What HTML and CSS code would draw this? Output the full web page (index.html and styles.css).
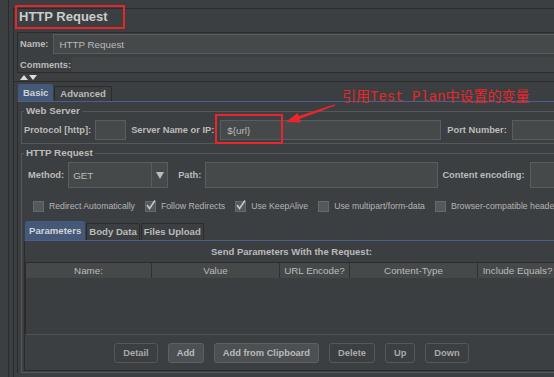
FILE: index.html
```html
<!DOCTYPE html>
<html lang="en">
<head>
    <meta charset="UTF-8">
    <meta name="viewport" content="width=device-width, initial-scale=1.0">
    <title>HTTP Request</title>
    <link rel="stylesheet" href="styles.css">
</head>
<body>
    <div class="side"><span class="side-grip"></span></div>
    <div class="main">
        <div class="title-row">
            <h1 class="title">HTTP Request</h1>
        </div>
        <div class="namebox">
            <div class="row name-row">
                <span>Name:</span>
                <div class="field name-field">HTTP Request</div>
            </div>
            <div class="row comments-row">
                <span>Comments:</span>
                <div class="field comments-field"></div>
            </div>
        </div>
        <div class="split-bar">
            <span class="tri up"></span><span class="tri down"></span>
            <span class="grip-h"></span>
        </div>
        <div class="tabs">
            <div class="tab active">Basic</div>
            <div class="tab">Advanced</div>
        </div>
        <div class="tab-body">
            <div class="group web-server">
                <div class="group-title">Web Server</div>
                <div class="row ws-row">
                    <span class="l-protocol">Protocol [http]:</span>
                    <div class="field w-protocol"></div>
                    <span class="l-server">Server Name or IP:</span>
                    <div class="field w-server">${url}</div>
                    <span class="l-port">Port Number:</span>
                    <div class="field w-port"></div>
                </div>
            </div>
            <div class="group http-group">
                <div class="group-title">HTTP Request</div>
                <div class="row method-row">
                    <span class="l-method">Method:</span>
                    <div class="select">
                        <span class="select-value">GET</span>
                        <span class="select-btn"><span class="caret"></span></span>
                    </div>
                    <span class="l-path">Path:</span>
                    <div class="field w-path"></div>
                    <span class="l-enc">Content encoding:</span>
                    <div class="field w-enc"></div>
                </div>
                <div class="row checks-row">
                    <span class="check"></span><span class="check-label">Redirect Automatically</span>
                    <span class="check on"><svg viewBox="0 0 11 11" width="11" height="11"><polyline points="2,5 4.5,8.5 10,0.5" fill="none" stroke="#c4c4c4" stroke-width="1.6"/></svg></span><span class="check-label">Follow Redirects</span>
                    <span class="check on"><svg viewBox="0 0 11 11" width="11" height="11"><polyline points="2,5 4.5,8.5 10,0.5" fill="none" stroke="#c4c4c4" stroke-width="1.6"/></svg></span><span class="check-label">Use KeepAlive</span>
                    <span class="check"></span><span class="check-label">Use multipart/form-data</span>
                    <span class="check"></span><span class="check-label">Browser-compatible headers</span>
                </div>
                <div class="params">
                    <div class="ptabs">
                        <div class="ptab active">Parameters</div>
                        <div class="ptab">Body Data</div>
                        <div class="ptab">Files Upload</div>
                    </div>
                    <div class="pbody">
                        <div class="caption">Send Parameters With the Request:</div>
                        <div class="table">
                            <div class="thead">
                                <div class="th">Name:</div>
                                <div class="th">Value</div>
                                <div class="th">URL Encode?</div>
                                <div class="th">Content-Type</div>
                                <div class="th">Include Equals?</div>
                            </div>
                            <div class="tbody"></div>
                        </div>
                        <div class="buttons">
                            <button class="btn dim">Detail</button>
                            <button class="btn">Add</button>
                            <button class="btn">Add from Clipboard</button>
                            <button class="btn dim">Delete</button>
                            <button class="btn dim">Up</button>
                            <button class="btn dim">Down</button>
                        </div>
                    </div>
                </div>
            </div>
        </div>
    </div>

    <!-- annotation drawn over the screenshot -->
    <div class="note">引用Test Plan中设置的变量</div>
    <div class="mark"></div>
    <svg class="arrow" width="554" height="377" viewBox="0 0 554 377">
        <polygon fill="#e8262b" points="286,122 297.7,112.8 298.8,116.1 334.8,104.3 335.4,105.6 299.8,118.9 300.9,122.4"/>
    </svg>
</body>
</html>
```

FILE: styles.css
```css
* {
    box-sizing: border-box;
}
html, body {
    margin: 0;
    background-color: #3c3f41;
}
body {
    width: 554px;
    height: 377px;
    overflow: hidden;
    display: flex;
    position: relative;
    font-family: "Liberation Sans", Arial, sans-serif;
    font-size: 9.3px;
    font-weight: bold;
    color: #bbbbbb;
}
.side {
    width: 9px;
    flex-shrink: 0;
    border-right: 1px solid #2b2b2b;
    display: flex;
    flex-direction: column;
    justify-content: center;
    align-items: center;
}
.side-grip {
    width: 4px;
    height: 9px;
    margin-top: 23px;
    background-image: radial-gradient(#a0a0a0 45%, transparent 50%);
    background-size: 2px 2px;
}
.main {
    width: 546px;
    flex-shrink: 0;
    margin-left: 4px;
    margin-top: 8px;
    border-top: 1px solid #2b2b2b;
    border-left: 1px solid #2b2b2b;
}
.title-row {
    height: 23px;
    display: flex;
    align-items: flex-start;
}
.title {
    margin: -4px 0 0 1px;
    padding: 2px 15px 2px 2px;
    border: 2px solid #e5272b;
    font-size: 13px;
    line-height: 16px;
    color: #cccccc;
}
.row {
    display: flex;
    align-items: center;
    white-space: nowrap;
}
.field {
    height: 100%;
    background-color: #45494a;
    border: 1px solid #5a5d5f;
    padding-left: 5px;
    display: flex;
    align-items: center;
    font-weight: normal;
    font-size: 9.8px;
    flex-shrink: 0;
}
.namebox {
    margin-left: 3px;
    padding: 1px 0 0 2px;
    border-top: 1px solid #2b2b2b;
    border-left: 1px solid #2b2b2b;
    border-bottom: 1px solid #2b2b2b;
}
.name-row {
    height: 20px;
    gap: 5px;
}
.name-field {
    flex: 1;
}
.comments-row {
    height: 15px;
    margin-top: 3px;
    gap: 1px;
}
.comments-field {
    flex: 1;
    background-color: #424547;
    border-color: #424547;
}
.split-bar {
    height: 9px;
    padding-left: 6px;
    border-bottom: 1px solid #2b2b2b;
    display: flex;
    align-items: center;
}
.tri {
    width: 0;
    height: 0;
    border-left: 4.5px solid transparent;
    border-right: 4.5px solid transparent;
    margin-right: 1px;
}
.tri.up {
    border-bottom: 5px solid #dddddd;
}
.tri.down {
    border-top: 5px solid #dddddd;
}
.grip-h {
    width: 12px;
    height: 3px;
    margin-left: 252px;
    background-image: radial-gradient(#a8a8a8 45%, transparent 50%);
    background-size: 2px 1.5px;
}
.tabs {
    height: 19px;
    padding-left: 4px;
    display: flex;
    align-items: flex-end;
}
.tab {
    height: 15px;
    line-height: 14px;
    padding: 0 5px;
    margin-left: 1px;
    border: 1px solid #2b2b2b;
    border-bottom: none;
    border-radius: 2px 2px 0 0;
    font-size: 9.5px;
}
.tab.active {
    height: 17px;
    line-height: 17px;
    margin-left: 0;
    border: none;
    background-color: #44587a;
    color: #d2d2d2;
}
.tab-body {
    margin-left: 3px;
    padding-left: 3px;
    border-top: 1px solid #4a6088;
    border-left: 1px solid #2b2b2b;
}
.group {
    border: 1px solid #55585a;
}
.group-title {
    width: fit-content;
    margin: -7px 0 0 2px;
    padding: 0 2px;
    line-height: 12px;
    font-size: 9.8px;
    background-color: #3c3f41;
}
.web-server {
    margin-top: 9px;
    padding-bottom: 3px;
}
.ws-row {
    height: 20px;
    margin-top: 3px;
    padding-left: 2px;
}
.l-protocol { margin-right: 4px; }
.w-protocol { width: 31px; }
.l-server { margin: 0 6px 0 5px; }
.w-server { width: 221px; padding-left: 6px; }
.l-port { margin: 0 5px 0 6px; }
.w-port { width: 60px; }
.http-group {
    margin-top: 9px;
    padding-bottom: 1px;
}
.method-row {
    height: 26px;
    margin-top: 3px;
    padding-left: 6px;
}
.l-method { margin-right: 4px; }
.select {
    width: 100px;
    height: 100%;
    display: flex;
    flex-shrink: 0;
    background-color: #45494a;
    border: 1px solid #5a5d5f;
}
.select-value {
    flex: 1;
    padding-left: 4px;
    display: flex;
    align-items: center;
    font-weight: normal;
    font-size: 9.8px;
}
.select-btn {
    width: 16px;
    border-left: 1px solid #5a5d5f;
    display: flex;
    align-items: center;
    justify-content: center;
}
.caret {
    width: 0;
    height: 0;
    border-left: 4px solid transparent;
    border-right: 4px solid transparent;
    border-top: 7px solid #bbbbbb;
}
.l-path { margin: 0 4px 0 10px; }
.w-path { width: 233px; }
.l-enc { margin: 0 5px 0 4px; }
.w-enc { width: 40px; }
.checks-row {
    height: 12px;
    margin-top: 12px;
    padding-left: 11px;
}
.check {
    width: 11px;
    height: 11px;
    flex-shrink: 0;
    background-color: #54585a;
    border: 1px solid #65696b;
    display: flex;
    overflow: visible;
}
.check svg {
    margin: -2px 0 0 -1px;
    overflow: visible;
}
.check-label {
    margin: 0 10px 0 5px;
    font-weight: normal;
    font-size: 8.7px;
    color: #b4b4b4;
}
.params {
    margin: 9px 0 0 2px;
}
.ptabs {
    height: 19px;
    padding-left: 1px;
    display: flex;
    align-items: flex-end;
}
.ptab {
    height: 17px;
    line-height: 16px;
    padding: 0 2px;
    margin-left: 1px;
    border: 1px solid #2b2b2b;
    border-bottom: none;
    border-radius: 2px 2px 0 0;
    font-size: 9.6px;
}
.ptab.active {
    height: 19px;
    line-height: 19px;
    padding: 0 4px;
    margin-left: 0;
    border: none;
    background-color: #44587a;
    color: #d2d2d2;
}
.pbody {
    border-top: 1px solid #4a6088;
    border-left: 1px solid #2b2b2b;
    border-bottom: 1px solid #2b2b2b;
}
.caption {
    height: 21px;
    line-height: 21px;
    text-align: center;
    font-size: 9.5px;
}
.table {
    border-top: 1px solid #2b2b2b;
    border-left: 1px solid #2b2b2b;
    border-bottom: 1px solid #4e5254;
}
.thead {
    height: 15px;
    display: grid;
    grid-template-columns: 126px 128px 70px 128px 1fr;
    background-color: #45494a;
}
.th {
    line-height: 15px;
    text-align: center;
    border-right: 1px solid #2f3133;
    font-weight: normal;
    font-size: 9.8px;
    white-space: nowrap;
    overflow: hidden;
}
.tbody {
    height: 56px;
    background-color: #3b3e40;
}
.buttons {
    display: flex;
    justify-content: center;
    gap: 10px;
    padding: 8px 0 7px;
}
.btn {
    height: 20px;
    padding: 0 8px;
    font: inherit;
    line-height: 18px;
    color: #bbbbbb;
    background-color: #4c5052;
    border: 1px solid #5e6163;
    border-radius: 3px;
}
.btn.dim {
    background-color: #3c3f41;
    border-color: #55585a;
    color: #a9a9a9;
}
.note {
    position: absolute;
    left: 342px;
    top: 88px;
    font-family: "Liberation Mono", "Noto Sans CJK SC", monospace;
    font-size: 14px;
    font-weight: normal;
    line-height: 18px;
    color: #e8262b;
    white-space: nowrap;
}
.mark {
    position: absolute;
    left: 215px;
    top: 114px;
    width: 68px;
    height: 30px;
    border: 2px solid #e8262b;
}
.arrow {
    position: absolute;
    left: 0;
    top: 0;
    pointer-events: none;
}
```
